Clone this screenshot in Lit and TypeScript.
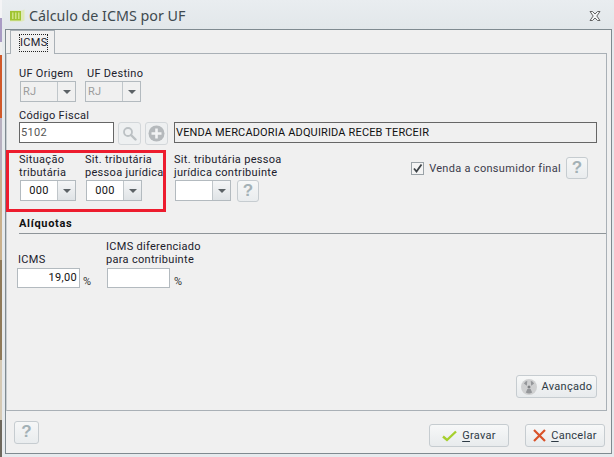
import { LitElement, html, css } from "lit";
import { customElement } from "lit/decorators.js";

@customElement("app-root")
export class AppRoot extends LitElement {
  static styles = css`
    :host {
      display: flex;
      width: 614px;
      height: 457px;
      overflow: hidden;
      position: relative;
      font-family: Roboto, "Noto Sans", sans-serif;
      font-size: 11px;
      letter-spacing: 0.3px;
      color: #20202c;
    }
    .desk {
      width: 2px;
      flex: none;
      background: linear-gradient(
        #f4f4f6 0 18px,
        #a99bc4 18px 42px,
        #eeeeee 42px 55px,
        #d0592a 55px 118px,
        #b8b0c0 118px 170px,
        #c9b08c 170px 260px,
        #8f7a5a 260px 360px,
        #d5c9b4 360px 420px,
        #6d675c 420px
      );
    }
    .window {
      flex: 1;
      min-width: 0;
      display: flex;
      flex-direction: column;
      padding: 0 2px 3px 3px;
      background: linear-gradient(#e9edf0, #e2e7ea 29px, #e6eaed 29px);
    }
    .title {
      height: 29px;
      flex: none;
      display: flex;
      align-items: center;
      padding: 2px 11px 0 4px;
      box-sizing: border-box;
    }
    .title svg.app {
      margin-right: 4px;
    }
    .title span {
      font-family: "Noto Sans", sans-serif;
      font-size: 14.3px;
      letter-spacing: 0;
      color: #3f4a50;
    }
    .title svg.close {
      margin-left: auto;
    }
    .frame {
      flex: 1;
      min-height: 0;
      display: flex;
      flex-direction: column;
      border: 1px solid #7f8a90;
      background: #f0f0f0;
    }
    .tabs {
      height: 23px;
      flex: none;
      padding-left: 4px;
      display: flex;
      position: relative;
      z-index: 1;
    }
    .tab {
      width: 45px;
      height: 24px;
      box-sizing: border-box;
      border: 1px solid #a9b0b6;
      border-bottom: none;
      background: #f0f0f0;
      padding: 3px 0 0 8px;
    }
    .tab span {
      display: block;
      width: 29px;
      height: 18px;
      line-height: 16px;
      box-sizing: border-box;
      border: 1px dotted #222;
      text-align: center;
    }
    .panel {
      height: 358px;
      flex: none;
      box-sizing: border-box;
      margin-right: 4px;
      border: 1px solid #a9b0b6;
      border-left-color: #c8cdd1;
      padding: 13px 9px 12px 12px;
      display: flex;
      flex-direction: column;
    }
    .row {
      display: flex;
      align-items: flex-start;
    }
    .uf {
      gap: 8px;
    }
    .uf .field + .field .label {
      padding-left: 3px;
    }
    .label {
      line-height: 13px;
      white-space: nowrap;
    }
    .field .label {
      height: 14px;
    }
    .field.two .label {
      height: 27px;
    }
    .codigo .field .label {
      height: 13px;
    }
    .select {
      width: 56px;
      height: 21px;
      box-sizing: border-box;
      border: 1px solid #b3babf;
      background: #fff;
      display: flex;
      margin-left: 1px;
    }
    .select.off {
      background: #f0f0f0;
      color: #9c9c9c;
    }
    .select .value {
      flex: 1;
      line-height: 19px;
      padding-left: 2px;
    }
    .select.mid .value {
      text-align: center;
      padding: 0;
      color: #111;
    }
    .select .arrow {
      width: 17px;
      border-left: 1px solid #c0c6ca;
      background: linear-gradient(#f5f6f7, #dfe3e6);
      display: flex;
      align-items: center;
      justify-content: center;
    }
    .select .arrow i {
      border: 4px solid transparent;
      border-top: 4px solid #5c6266;
      border-bottom: none;
    }
    .select.off .arrow {
      background: #f0f0f0;
    }
    .codigo {
      margin-top: 7px;
    }
    .controls {
      display: flex;
      align-items: flex-start;
      width: 578px;
    }
    .input {
      height: 21px;
      box-sizing: border-box;
      border: 1px solid #666;
      background: #fff;
      line-height: 19px;
      padding: 0 1px;
    }
    .input.code {
      width: 95px;
      color: #555;
    }
    .input.desc {
      flex: 1;
      background: #f0f0f0;
      color: #111;
      margin-left: 6px;
      letter-spacing: 0.15px;
      white-space: nowrap;
      overflow: hidden;
    }
    .icon-btn {
      width: 23px;
      height: 23px;
      box-sizing: border-box;
      border: 1px solid #d3d7da;
      border-radius: 3px;
      background: #eef0f1;
      display: flex;
      align-items: center;
      justify-content: center;
      margin-left: 4px;
    }
    .icon-btn:first-of-type {
      margin-left: 5px;
    }
    .sit {
      margin-top: 8px;
    }
    .sit .w1 {
      width: 66px;
    }
    .sit .w2 {
      width: 89px;
    }
    .with-help {
      display: flex;
      gap: 6px;
      align-items: flex-start;
    }
    .help {
      width: 22px;
      height: 22px;
      box-sizing: border-box;
      border: 1px solid #c6ccd0;
      border-radius: 3px;
      background: linear-gradient(#f6f7f7, #e9ecee);
      color: #a3b1b6;
      font-family: "Liberation Sans", sans-serif;
      font-size: 17px;
      font-weight: 700;
      line-height: 20px;
      text-align: center;
    }
    .help.big {
      width: 25px;
      height: 23px;
    }
    .final {
      margin: 4px 9px 0 auto;
      display: flex;
      align-items: center;
    }
    .check {
      width: 13px;
      height: 13px;
      box-sizing: border-box;
      border: 1px solid #9aa2a7;
      background: #f4f4f4;
      margin-right: 5px;
      display: flex;
    }
    .final .text {
      color: #3c3c4c;
      margin-right: 5px;
      white-space: nowrap;
    }
    .section {
      margin: 14px -9px 0 0;
      font-weight: 700;
      line-height: 14px;
      color: #111;
      letter-spacing: 0.7px;
      padding: 1px 0 3px;
      border-bottom: 1px solid #8f9599;
      height: 13px;
    }
    .rates {
      margin: 6px 0 0 -2px;
    }
    .rate {
      display: flex;
      flex-direction: column;
    }
    .rate.first {
      width: 90px;
    }
    .rate .label {
      height: 28px;
      display: flex;
      flex-direction: column;
      justify-content: flex-start;
      margin-left: -1px;
    }
    .rate.first .label {
      justify-content: flex-end;
      padding-bottom: 2px;
      height: 26px;
      margin-left: 1px;
    }
    .rate .line {
      display: flex;
      align-items: flex-end;
      gap: 3px;
    }
    .rate .box {
      width: 63px;
      height: 20px;
      box-sizing: border-box;
      border: 1px solid #b3babf;
      background: #fff;
      line-height: 18px;
      text-align: right;
      padding-right: 2px;
      color: #111;
    }
    .pct {
      line-height: 13px;
      color: #333;
    }
    .pct.far {
      margin-left: 1px;
    }
    .btn {
      height: 23px;
      box-sizing: border-box;
      border: 1px solid #c6ccd0;
      border-radius: 3px;
      background: linear-gradient(#f7f8f8, #e8ebed);
      display: flex;
      align-items: center;
      justify-content: center;
      gap: 5px;
      color: #2e3a44;
    }
    .btn u {
      text-underline-offset: 2px;
    }
    .advanced {
      width: 81px;
      margin: auto 0 0 auto;
    }
    .footer {
      flex: 1;
      display: flex;
      align-items: flex-start;
      padding: 10px 6px 0 8px;
    }
    .footer .btn {
      width: 80px;
      margin-top: 3px;
    }
    .footer .save {
      margin-left: auto;
    }
    .footer .cancel {
      margin-left: 16px;
    }
    .mark {
      position: absolute;
      left: 6px;
      top: 150px;
      width: 160px;
      height: 62px;
      box-sizing: border-box;
      border: 3px solid #ed1c2e;
      pointer-events: none;
    }
  `;

  private select(value: string, mods = "") {
    return html`<div class="select ${mods}">
      <div class="value">${value}</div>
      <div class="arrow"><i></i></div>
    </div>`;
  }

  render() {
    return html`
      <div class="desk"></div>
      <div class="window">
        <div class="title">
          <svg class="app" width="16" height="13" viewBox="0 0 16 13">
            <path d="M1 1.500h12l2.500-1v11l-2.500 1H1z" fill="#dfe9b8" />
            <path d="M1 2h11v9.500H1z" fill="#a0c431" />
            <path d="M3 3.500h1.500v6.500H3zM6 3.500h1.500v6.500H6zM9 3.500h1.500v6.500H9z" fill="#cfe385" />
          </svg>
          <span>Cálculo de ICMS por UF</span>
          <svg class="close" width="12" height="10" viewBox="0 0 12 10">
            <path
              d="M1 .5h2.500L6 3l2.500-2.500H11L7.800 5 11 9.500H8.500L6 7 3.500 9.500H1L4.200 5z"
              fill="#f4f6f7"
              stroke="#555"
              stroke-width=".9"
            />
          </svg>
        </div>
        <div class="frame">
          <div class="tabs">
            <div class="tab"><span>ICMS</span></div>
          </div>
          <div class="panel">
            <div class="row uf">
              <div class="field">
                <div class="label">UF Origem</div>
                ${this.select("RJ", "off")}
              </div>
              <div class="field">
                <div class="label">UF Destino</div>
                ${this.select("RJ", "off")}
              </div>
            </div>

            <div class="row codigo">
              <div class="field">
                <div class="label">Código Fiscal</div>
                <div class="controls">
                  <div class="input code">5102</div>
                  <div class="icon-btn">
                    <svg width="15" height="15" viewBox="0 0 15 15">
                      <circle cx="6" cy="6" r="4" fill="none" stroke="#bcc1c4" stroke-width="1.800" />
                      <path d="M9 9l4.500 4.500" stroke="#bcc1c4" stroke-width="2.400" stroke-linecap="round" />
                    </svg>
                  </div>
                  <div class="icon-btn">
                    <svg width="17" height="17" viewBox="0 0 17 17">
                      <circle cx="8.500" cy="8.500" r="8" fill="#b5b9bc" />
                      <path d="M8.500 3.500v10M3.500 8.500h10" stroke="#f2f3f4" stroke-width="2.600" />
                    </svg>
                  </div>
                  <div class="input desc">VENDA MERCADORIA ADQUIRIDA RECEB TERCEIR</div>
                </div>
              </div>
            </div>

            <div class="row sit">
              <div class="field two w1">
                <div class="label">Situação<br />tributária</div>
                ${this.select("000", "mid")}
              </div>
              <div class="field two w2">
                <div class="label">Sit. tributária<br />pessoa jurídica</div>
                ${this.select("000", "mid")}
              </div>
              <div class="field two">
                <div class="label">Sit. tributária pessoa<br />jurídica contribuinte</div>
                <div class="with-help">
                  ${this.select("")}
                  <div class="help">?</div>
                </div>
              </div>
              <div class="final">
                <div class="check">
                  <svg width="11" height="11" viewBox="0 0 11 11">
                    <path d="M2 5.500l2.500 3L9.500 1.500" fill="none" stroke="#3d4347" stroke-width="1.800" />
                  </svg>
                </div>
                <div class="text">Venda a consumidor final</div>
                <div class="help">?</div>
              </div>
            </div>

            <div class="section">Alíquotas</div>

            <div class="row rates">
              <div class="rate first">
                <div class="label">ICMS</div>
                <div class="line"><div class="box">19,00</div><span class="pct">%</span></div>
              </div>
              <div class="rate">
                <div class="label">ICMS diferenciado<br />para contribuinte</div>
                <div class="line"><div class="box"></div><span class="pct far">%</span></div>
              </div>
            </div>

            <div class="btn advanced">
              <svg width="16" height="16" viewBox="0 0 16 16">
                <circle cx="8" cy="8" r="8" fill="#cfd0d1" />
                <path d="M5.800 6.700L2.900 4.500A6.500 6.500 0 0 1 6.300 1.700z" fill="#95979a" />
                <path d="M10.200 6.700L13.100 4.500A6.500 6.500 0 0 0 9.700 1.700z" fill="#95979a" />
                <path d="M6.400 10L4.800 13.500A6.500 6.500 0 0 0 11.200 13.500L9.600 10z" fill="#95979a" />
                <circle cx="8" cy="8" r="1.500" fill="#7f8184" />
              </svg>
              Avançado
            </div>
          </div>

          <div class="footer">
            <div class="help big">?</div>
            <div class="btn save">
              <svg width="15" height="12" viewBox="0 0 15 12">
                <path d="M1 6.500l4 3.500L14 1.500" fill="none" stroke="#a6cf2d" stroke-width="2.400" />
              </svg>
              <span><u>G</u>ravar</span>
            </div>
            <div class="btn cancel">
              <svg width="13" height="13" viewBox="0 0 13 13">
                <path d="M1 1l11 11M12 1L1 12" stroke="#d9532a" stroke-width="2.200" />
              </svg>
              <span><u>C</u>ancelar</span>
            </div>
          </div>
        </div>
      </div>
      <div class="mark"></div>
    `;
  }
}
